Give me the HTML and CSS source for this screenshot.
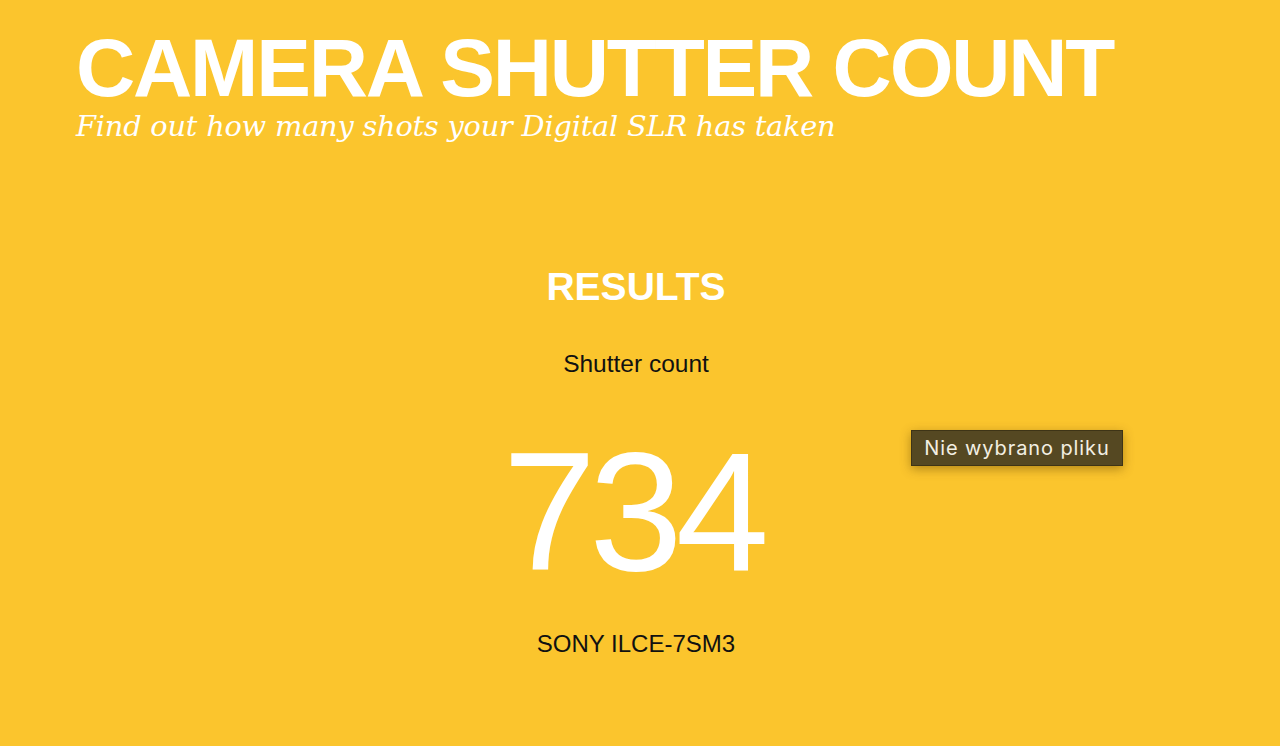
FILE: index.html
```html
<!DOCTYPE html>
<html lang="pl">
<head>
<meta charset="utf-8">
<title>Camera Shutter Count</title>
<link rel="stylesheet" href="styles.css">
</head>
<body>
<header class="masthead">
  <h1 class="title">CAMERA SHUTTER COUNT</h1>
  <p class="tagline">Find out how many shots your Digital SLR has taken</p>
</header>
<main class="results">
  <h2 class="results-title">RESULTS</h2>
  <p class="label">Shutter count</p>
  <div class="count">734</div>
  <p class="model">SONY ILCE-7SM3</p>
</main>
<div class="tooltip">Nie wybrano pliku</div>
</body>
</html>
```

FILE: styles.css
```css
html, body {
  margin: 0;
  padding: 0;
}
body {
  background: #fbc52d;
  width: 1280px;
  height: 746px;
  overflow: hidden;
  position: relative;
  font-family: "Liberation Sans", Arial, sans-serif;
  color: #fff;
}
.masthead {
  padding: 28px 0 0 76px;
}
.title {
  margin: 0;
  font-size: 82px;
  font-weight: bold;
  line-height: 80px;
  letter-spacing: -2.2px;
  color: #fff;
}
.tagline {
  margin: 0;
  font-family: "DejaVu Serif", Georgia, serif;
  font-style: italic;
  font-size: 28.8px;
  line-height: 36px;
  letter-spacing: -0.2px;
  color: #fff;
}
.results {
  display: flex;
  flex-direction: column;
  align-items: center;
  width: 1272px;
  padding-top: 121px;
}
.results-title {
  margin: 0;
  font-size: 39px;
  font-weight: bold;
  line-height: 44px;
  color: #fff;
}
.label {
  margin: 41px 0 0 0;
  font-size: 24.5px;
  line-height: 28px;
  color: #111;
}
.count {
  margin-top: 39px;
  padding-right: 7px;
  font-size: 168px;
  line-height: 190px;
  letter-spacing: -7px;
  color: #fff;
}
.model {
  margin: 23px 0 0 0;
  font-size: 24px;
  line-height: 28px;
  color: #111;
}
.tooltip {
  position: absolute;
  left: 911px;
  top: 430px;
  width: 212px;
  height: 36px;
  box-sizing: border-box;
  background: #554822;
  border: 1px solid #3e3416;
  color: #f3efe2;
  font-family: Inter, "Liberation Sans", sans-serif;
  font-size: 20px;
  line-height: 34px;
  letter-spacing: 0.9px;
  text-align: center;
  box-shadow: 0 3px 10px rgba(90, 60, 0, 0.45);
}
```
